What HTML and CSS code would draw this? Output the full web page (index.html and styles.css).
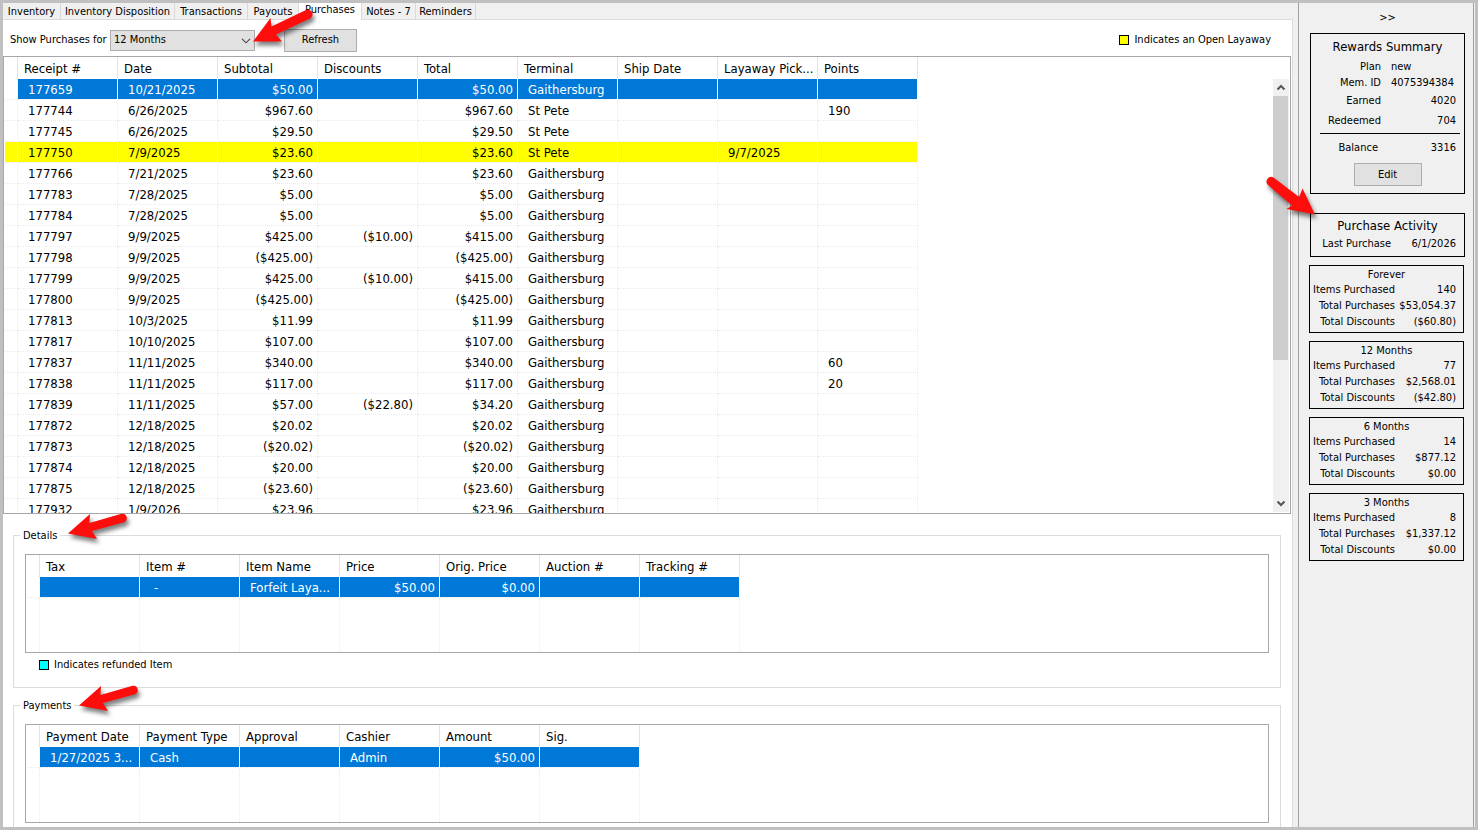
FILE: index.html
```html
<!DOCTYPE html>
<html lang="en">
<head>
<meta charset="utf-8">
<title>Customer Purchases</title>
<link rel="stylesheet" href="styles.css">
</head>
<body>
<div class="window">
  <main class="main">
    <nav class="tabs" role="tablist">
      <button class="tab" role="tab">Inventory</button>
      <button class="tab" role="tab">Inventory Disposition</button>
      <button class="tab" role="tab">Transactions</button>
      <button class="tab" role="tab">Payouts</button>
      <button class="tab tab-active" role="tab" aria-selected="true">Purchases</button>
      <button class="tab" role="tab">Notes - 7</button>
      <button class="tab" role="tab">Reminders</button>
    </nav>
    <section class="page">
      <div class="toolbar">
        <label class="range-label" for="range">Show Purchases for</label>
        <div class="select-wrap">
          <select id="range" class="select"><option>12 Months</option></select>
          <svg class="chevron" viewBox="0 0 10 6" aria-hidden="true"><path d="M1 0.8 5 4.8 9 0.8" fill="none" stroke="#444" stroke-width="1.1"/></svg>
        </div>
        <button class="button refresh">Refresh</button>
        <div class="key key-right"><span class="swatch swatch-yellow"></span><span>Indicates an Open Layaway</span></div>
      </div>

      <div class="grid-box purchases">
        <table class="grid">
          <colgroup><col class="gutter"><col class="c"><col class="c"><col class="c"><col class="c"><col class="c"><col class="c"><col class="c"><col class="c"><col class="c"></colgroup>
          <thead><tr><th></th><th>Receipt #</th><th>Date</th><th>Subtotal</th><th>Discounts</th><th>Total</th><th>Terminal</th><th>Ship Date</th><th>Layaway Pick...</th><th>Points</th></tr></thead>
          <tbody>
            <tr class="selected"><td></td><td>177659</td><td>10/21/2025</td><td class="num">$50.00</td><td class="num"></td><td class="num">$50.00</td><td>Gaithersburg</td><td></td><td></td><td></td></tr>
            <tr><td></td><td>177744</td><td>6/26/2025</td><td class="num">$967.60</td><td class="num"></td><td class="num">$967.60</td><td>St Pete</td><td></td><td></td><td>190</td></tr>
            <tr><td></td><td>177745</td><td>6/26/2025</td><td class="num">$29.50</td><td class="num"></td><td class="num">$29.50</td><td>St Pete</td><td></td><td></td><td></td></tr>
            <tr class="layaway"><td></td><td>177750</td><td>7/9/2025</td><td class="num">$23.60</td><td class="num"></td><td class="num">$23.60</td><td>St Pete</td><td></td><td>9/7/2025</td><td></td></tr>
            <tr><td></td><td>177766</td><td>7/21/2025</td><td class="num">$23.60</td><td class="num"></td><td class="num">$23.60</td><td>Gaithersburg</td><td></td><td></td><td></td></tr>
            <tr><td></td><td>177783</td><td>7/28/2025</td><td class="num">$5.00</td><td class="num"></td><td class="num">$5.00</td><td>Gaithersburg</td><td></td><td></td><td></td></tr>
            <tr><td></td><td>177784</td><td>7/28/2025</td><td class="num">$5.00</td><td class="num"></td><td class="num">$5.00</td><td>Gaithersburg</td><td></td><td></td><td></td></tr>
            <tr><td></td><td>177797</td><td>9/9/2025</td><td class="num">$425.00</td><td class="num">($10.00)</td><td class="num">$415.00</td><td>Gaithersburg</td><td></td><td></td><td></td></tr>
            <tr><td></td><td>177798</td><td>9/9/2025</td><td class="num">($425.00)</td><td class="num"></td><td class="num">($425.00)</td><td>Gaithersburg</td><td></td><td></td><td></td></tr>
            <tr><td></td><td>177799</td><td>9/9/2025</td><td class="num">$425.00</td><td class="num">($10.00)</td><td class="num">$415.00</td><td>Gaithersburg</td><td></td><td></td><td></td></tr>
            <tr><td></td><td>177800</td><td>9/9/2025</td><td class="num">($425.00)</td><td class="num"></td><td class="num">($425.00)</td><td>Gaithersburg</td><td></td><td></td><td></td></tr>
            <tr><td></td><td>177813</td><td>10/3/2025</td><td class="num">$11.99</td><td class="num"></td><td class="num">$11.99</td><td>Gaithersburg</td><td></td><td></td><td></td></tr>
            <tr><td></td><td>177817</td><td>10/10/2025</td><td class="num">$107.00</td><td class="num"></td><td class="num">$107.00</td><td>Gaithersburg</td><td></td><td></td><td></td></tr>
            <tr><td></td><td>177837</td><td>11/11/2025</td><td class="num">$340.00</td><td class="num"></td><td class="num">$340.00</td><td>Gaithersburg</td><td></td><td></td><td>60</td></tr>
            <tr><td></td><td>177838</td><td>11/11/2025</td><td class="num">$117.00</td><td class="num"></td><td class="num">$117.00</td><td>Gaithersburg</td><td></td><td></td><td>20</td></tr>
            <tr><td></td><td>177839</td><td>11/11/2025</td><td class="num">$57.00</td><td class="num">($22.80)</td><td class="num">$34.20</td><td>Gaithersburg</td><td></td><td></td><td></td></tr>
            <tr><td></td><td>177872</td><td>12/18/2025</td><td class="num">$20.02</td><td class="num"></td><td class="num">$20.02</td><td>Gaithersburg</td><td></td><td></td><td></td></tr>
            <tr><td></td><td>177873</td><td>12/18/2025</td><td class="num">($20.02)</td><td class="num"></td><td class="num">($20.02)</td><td>Gaithersburg</td><td></td><td></td><td></td></tr>
            <tr><td></td><td>177874</td><td>12/18/2025</td><td class="num">$20.00</td><td class="num"></td><td class="num">$20.00</td><td>Gaithersburg</td><td></td><td></td><td></td></tr>
            <tr><td></td><td>177875</td><td>12/18/2025</td><td class="num">($23.60)</td><td class="num"></td><td class="num">($23.60)</td><td>Gaithersburg</td><td></td><td></td><td></td></tr>
            <tr><td></td><td>177932</td><td>1/9/2026</td><td class="num">$23.96</td><td class="num"></td><td class="num">$23.96</td><td>Gaithersburg</td><td></td><td></td><td></td></tr>
          </tbody>
        </table>
        <div class="scrollbar" aria-hidden="true">
          <svg class="scroll-arrow" viewBox="0 0 16 17"><path d="M4.5 10.500 8 7 11.500 10.500" fill="none" stroke="#555" stroke-width="2"/></svg>
          <div class="scroll-thumb"></div>
          <svg class="scroll-arrow" viewBox="0 0 16 17"><path d="M4.5 6.500 8 10 11.500 6.500" fill="none" stroke="#555" stroke-width="2"/></svg>
        </div>
      </div>

      <fieldset class="group">
        <legend>Details</legend>
        <div class="grid-box small-grid">
          <table class="grid">
            <colgroup><col class="gutter"><col class="c"><col class="c"><col class="c"><col class="c"><col class="c"><col class="c"><col class="c"></colgroup>
            <thead><tr><th></th><th>Tax</th><th>Item #</th><th>Item Name</th><th>Price</th><th>Orig. Price</th><th>Auction #</th><th>Tracking #</th></tr></thead>
            <tbody>
              <tr class="selected"><td></td><td></td><td class="dash">-</td><td>Forfeit Laya...</td><td class="num">$50.00</td><td class="num">$0.00</td><td></td><td></td></tr>
              <tr class="filler"><td></td><td></td><td></td><td></td><td></td><td></td><td></td><td></td></tr>
            </tbody>
          </table>
        </div>
        <div class="key key-refund"><span class="swatch swatch-cyan"></span><span>Indicates refunded Item</span></div>
      </fieldset>

      <fieldset class="group group-last">
        <legend>Payments</legend>
        <div class="grid-box small-grid">
          <table class="grid">
            <colgroup><col class="gutter"><col class="c"><col class="c"><col class="c"><col class="c"><col class="c"><col class="c"></colgroup>
            <thead><tr><th></th><th>Payment Date</th><th>Payment Type</th><th>Approval</th><th>Cashier</th><th>Amount</th><th>Sig.</th></tr></thead>
            <tbody>
              <tr class="selected"><td></td><td>1/27/2025 3...</td><td>Cash</td><td></td><td>Admin</td><td class="num">$50.00</td><td></td></tr>
              <tr class="filler"><td></td><td></td><td></td><td></td><td></td><td></td><td></td></tr>
            </tbody>
          </table>
        </div>
      </fieldset>
    </section>
  </main>

  <aside class="side">
    <button class="collapse">&gt;&gt;</button>
    <section class="card rewards">
      <h2 class="card-title">Rewards Summary</h2>
      <dl class="pairs">
        <div class="pair"><dt>Plan</dt><dd class="start">new</dd></div>
        <div class="pair"><dt>Mem. ID</dt><dd class="start">4075394384</dd></div>
        <div class="pair pair-tall"><dt>Earned</dt><dd>4020</dd></div>
        <div class="pair pair-tall"><dt>Redeemed</dt><dd>704</dd></div>
        <div class="pair balance"><dt>Balance</dt><dd>3316</dd></div>
      </dl>
      <button class="button edit">Edit</button>
    </section>
    <section class="card activity">
      <h2 class="card-title">Purchase Activity</h2>
      <dl class="pairs"><div class="pair"><dt>Last Purchase</dt><dd>6/1/2026</dd></div></dl>
    </section>
    <div class="periods">
      <section class="card period">
        <h3 class="period-title">Forever</h3>
        <dl class="pairs">
          <div class="pair"><dt>Items Purchased</dt><dd>140</dd></div>
          <div class="pair"><dt>Total Purchases</dt><dd>$53,054.37</dd></div>
          <div class="pair"><dt>Total Discounts</dt><dd>($60.80)</dd></div>
        </dl>
      </section>
      <section class="card period">
        <h3 class="period-title">12 Months</h3>
        <dl class="pairs">
          <div class="pair"><dt>Items Purchased</dt><dd>77</dd></div>
          <div class="pair"><dt>Total Purchases</dt><dd>$2,568.01</dd></div>
          <div class="pair"><dt>Total Discounts</dt><dd>($42.80)</dd></div>
        </dl>
      </section>
      <section class="card period">
        <h3 class="period-title">6 Months</h3>
        <dl class="pairs">
          <div class="pair"><dt>Items Purchased</dt><dd>14</dd></div>
          <div class="pair"><dt>Total Purchases</dt><dd>$877.12</dd></div>
          <div class="pair"><dt>Total Discounts</dt><dd>$0.00</dd></div>
        </dl>
      </section>
      <section class="card period">
        <h3 class="period-title">3 Months</h3>
        <dl class="pairs">
          <div class="pair"><dt>Items Purchased</dt><dd>8</dd></div>
          <div class="pair"><dt>Total Purchases</dt><dd>$1,337.12</dd></div>
          <div class="pair"><dt>Total Discounts</dt><dd>$0.00</dd></div>
        </dl>
      </section>
    </div>
  </aside>
</div>

<svg class="pointer pointer-range" viewBox="0 0 70 50" aria-hidden="true"><path d="M8 41.500 25.500 18 26.500 26.500 61 10A4.700 4.700 0 0 1 65 18.500L31 34.500 37 41.500Z"/></svg>
<svg class="pointer pointer-activity" viewBox="0 0 70 60" aria-hidden="true"><path d="M55 43.500 42.500 17.500 39 26 13.500 6.500A4.700 4.700 0 0 0 8 14L32 34.500 26.500 38Z"/></svg>
<svg class="pointer pointer-details" viewBox="0 0 80 50" aria-hidden="true"><path d="M8 28.500 30 9 29.500 18 61.500 8.800A4.400 4.400 0 0 1 64 17.200L32 26 37 34Z"/></svg>
<svg class="pointer pointer-payments" viewBox="0 0 80 50" aria-hidden="true"><path d="M8 28.500 30 9 29.500 18 61.500 8.800A4.400 4.400 0 0 1 64 17.200L32 26 37 34Z"/></svg>
</body>
</html>
```
FILE: styles.css
```css
* { box-sizing: border-box; }

body {
  margin: 0;
  color: #000;
  font-family: "DejaVu Sans Condensed", "Noto Sans", sans-serif;
  font-size: 11px;
  line-height: 16px;
}

button, select { font: inherit; color: inherit; }

.window {
  display: flex;
  gap: 5px;
  height: 100vh;
  border: 3px solid #c0c0c0;
  background: #f0f0f0;
  overflow: hidden;
  padding-right: 1px;
}

.main {
  flex: 1;
  min-width: 0;
  display: flex;
  flex-direction: column;
}

/* Tabs */
.tabs {
  display: grid;
  grid-template-columns: 58px 114px 73px 51px 63px 54px 60px;
  height: 16px;
}
.tab {
  border: 0;
  border-right: 1px solid #d9d9d9;
  background: transparent;
  padding: 0;
  white-space: nowrap;
}
.tab-active {
  position: relative;
  background: #fff;
  height: 17px;
  padding-bottom: 4px;
  line-height: 13px;
}

.page {
  flex: 1;
  min-height: 0;
  display: flex;
  flex-direction: column;
  background: #fff;
  border-top: 1px solid #dcdcdc;
  border-right: 1px solid #dcdcdc;
}

/* Toolbar */
.toolbar {
  display: flex;
  align-items: center;
  height: 36px;
  padding: 4px 21px 0 7px;
}
.range-label { width: 100px; white-space: nowrap; }
.select-wrap { position: relative; width: 145px; }
.select {
  appearance: none;
  display: block;
  width: 100%;
  height: 21px;
  border: 1px solid #adadad;
  border-radius: 0;
  background: #e1e1e1;
  padding: 0 3px;
}
.chevron { position: absolute; right: 4px; top: 8px; width: 10px; height: 6px; }
.button {
  border: 1px solid #adadad;
  background: #e1e1e1;
  height: 23px;
  padding: 0;
}
.refresh { width: 73px; margin-left: 29px; }
.key { display: flex; align-items: center; gap: 5px; }
.key-right { margin-left: auto; }
.swatch { width: 10px; height: 10px; border: 1px solid #000; }
.swatch-yellow { background: #ff0; }
.swatch-cyan { background: #0ff; }

/* Data grids */
.grid-box {
  border: 1px solid #a7a7ab;
  background: #fff;
  overflow: hidden;
  padding-left: 1px;
}
.purchases {
  flex: 1;
  min-height: 0;
  display: flex;
  justify-content: space-between;
  margin-right: 1px;
}
.grid {
  table-layout: fixed;
  width: 0;
  border-collapse: separate;
  border-spacing: 0;
  font-size: 13px;
  line-height: 18px;
  white-space: nowrap;
  align-self: flex-start;
}
.gutter { width: 13px; }
.c { width: 100px; }
.grid th {
  height: 22px;
  padding: 1px 0 0 6px;
  border-right: 1px solid #e3e3e3;
  font-weight: normal;
  text-align: left;
}
.grid td {
  height: 21px;
  padding: 1px 0 0 10px;
  border-right: 1px dotted #ebebeb;
  border-bottom: 1px dotted #ebebeb;
  background-clip: padding-box;
}
.grid th:first-child, .grid td:first-child { padding: 0; }
.grid .num { padding: 1px 4px 0 0; text-align: right; }
.grid .dash { padding-left: 14px; }
.selected td:not(:first-child) {
  background-color: #0078d7;
  color: #fff;
  border-right: 1px solid #fff;
}
.layaway td { background-color: #ff0; }
.grid .filler td { height: 54px; border-bottom: 0; }

.scrollbar {
  display: flex;
  flex-direction: column;
  width: 16px;
  margin: 22px 1px 1px 0;
  background: #f0f0f0;
}
.scroll-arrow { width: 16px; height: 17px; flex: none; }
.scroll-thumb { height: 264px; background: #cdcdcd; width: 15px; margin-bottom: auto; }

/* Group boxes */
.group {
  min-width: 0;
  margin: 14px 11px 0 10px;
  padding: 11px 11px 0;
  border: 1px solid #dcdcdc;
}
.group legend { height: 15px; line-height: 16px; padding: 0 3px; margin-left: -5px; }
.small-grid { height: 99px; }
.key-refund { height: 34px; padding: 0 0 11px 14px; }
.group-last { margin-top: 10px; padding-bottom: 4px; border-bottom: 0; }

/* Side panel */
.side {
  flex: none;
  width: 176px;
  border-left: 1px solid #a0a0a0;
  border-right: 1px solid #a0a0a0;
  padding: 5px 8px 0 11px;
  display: flex;
  flex-direction: column;
}
.collapse { border: 0; background: transparent; padding: 0; height: 20px; }
.card { border: 1px solid #000; }
.card-title { margin: 0; font-size: 13px; font-weight: normal; text-align: center; line-height: 16px; }
.pairs { margin: 0; }
.pair { display: grid; grid-template-columns: 70px 1fr; column-gap: 10px; padding-right: 8px; white-space: nowrap; }
.pair dt { text-align: right; }
.pair dd { margin: 0; text-align: right; }
.pair .start { text-align: left; }
.rewards { margin-top: 5px; height: 161px; padding-top: 5px; display: flex; flex-direction: column; }
.rewards .pairs { padding-top: 4px; }
.pair-tall { line-height: 20px; }
.balance { margin: 2px 4px 0 9px; padding: 6px 4px 0 0; border-top: 1px solid #000; grid-template-columns: 58px 1fr; }
.edit { width: 68px; align-self: center; margin-top: 7px; }
.activity { margin-top: 19px; height: 44px; padding-top: 4px; }
.activity .pair { grid-template-columns: 80px 1fr; padding-top: 2px; }
.periods { display: flex; flex-direction: column; gap: 8px; margin: 8px 1px 0 -1px; }
.period { height: 68px; padding-top: 1px; }
.period-title { margin: 0; font-size: 11px; font-weight: normal; text-align: center; line-height: 15px; }
.period .pair { grid-template-columns: 85px 1fr; column-gap: 2px; padding-right: 7px; }

/* Callout arrows laid over the window */
.pointer {
  position: absolute;
  fill: #fd0d0b;
  filter: drop-shadow(2px 4px 2px rgba(0, 0, 0, 0.5));
  overflow: visible;
}
.pointer-range { left: 245px; top: 0; width: 70px; height: 50px; }
.pointer-activity { left: 1260px; top: 171px; width: 70px; height: 60px; }
.pointer-details { left: 60px; top: 505px; width: 80px; height: 50px; }
.pointer-payments { left: 71px; top: 677px; width: 80px; height: 50px; }
```
